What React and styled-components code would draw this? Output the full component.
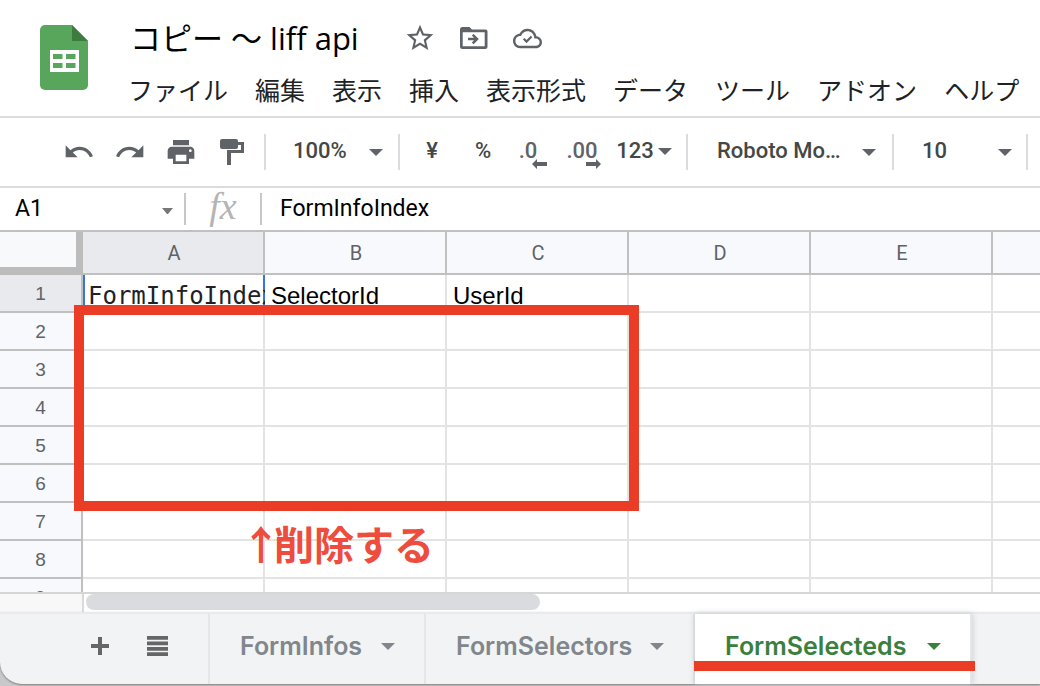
import React from 'react';
import styled, { createGlobalStyle } from 'styled-components';

const GlobalStyle = createGlobalStyle`
  *, *::before, *::after { box-sizing: border-box; }
  body { margin: 0; background: #c8c8c8; }
  button, input { font: inherit; color: inherit; border: 0; padding: 0; margin: 0; background: none; }
  button { cursor: pointer; }
`;

const UI = `Roboto, "Noto Sans CJK JP", sans-serif`;

const Page = styled.main`
  display: flex;
  flex-direction: column;
  height: 100vh;
  min-height: 600px;
  overflow: hidden;
  padding-bottom: 2px;
  background: linear-gradient(#c8c8c8, #c8c8c8) bottom / 100% 40px no-repeat;
  font-family: ${UI};
  position: relative;
`;

const Header = styled.header`
  display: flex;
  flex: none;
  height: 118px;
  padding-left: 40px;
  background: #fff;
  border-bottom: 2px solid #dadce0;
`;

const Logo = styled.svg`
  flex: none;
  width: 48px;
  height: 66px;
  margin-top: 25px;
`;

const HeaderBody = styled.div`
  flex: 1;
  min-width: 0;
  padding: 15px 0 0 42px;
`;

const TitleRow = styled.div`
  display: flex;
  align-items: center;
  height: 46px;
`;

const Title = styled.h1`
  margin: 0 45px 0 0;
  font: 400 31px/46px "Open Sans", "Noto Sans CJK JP", sans-serif;
  color: #000;
  white-space: nowrap;
`;

const TitleActions = styled.div`
  display: flex;
  gap: 22px;
`;

const IconButton = styled.button`
  display: flex;
  flex: none;
  align-items: center;
  justify-content: center;
  width: 32px;
  height: 32px;
  color: #5f6368;
  svg { display: block; fill: currentColor; }
`;

const MenuBar = styled.nav`
  display: flex;
  gap: 27px;
  margin-left: -2px;
`;

const MenuItem = styled.button`
  font: 400 25px/56px "Noto Sans CJK JP", sans-serif;
  color: #202124;
  white-space: nowrap;
`;

const Toolbar = styled.div`
  display: flex;
  flex: none;
  align-items: center;
  height: 70px;
  padding-left: 63px;
  background: #fff;
  border-bottom: 2px solid #dadce0;
  color: #444746;
  font: 500 22px/34px ${UI};
  overflow: hidden;
`;

const IconGroup = styled.div`
  display: flex;
  gap: 19px;
  margin-right: 16px;
`;

const Divider = styled.span`
  flex: none;
  width: 2px;
  height: 36px;
  background: #dadce0;
`;

const Choice = styled.button`
  display: flex;
  flex: none;
  align-items: center;
  justify-content: space-between;
  width: ${(p) => p.$w}px;
  height: 36px;
  padding: 0 ${(p) => p.$end || 16}px 2px ${(p) => p.$start}px;
  white-space: nowrap;
  svg { margin-top: 3px; }
`;

const Formats = styled.div`
  display: flex;
  flex: none;
  width: 286px;
  height: 36px;
  padding: 0 0 2px 6px;
`;

const FormatButton = styled.button`
  display: flex;
  flex: none;
  align-items: center;
  justify-content: center;
  gap: 4px;
  width: ${(p) => p.$w}px;
`;

const Decimal = styled.span`
  position: relative;
  color: #5f6368;
  svg { position: absolute; right: ${(p) => (p.$left ? -10 : -3)}px; bottom: -1px; fill: currentColor; }
`;

const Caret = styled.svg`
  flex: none;
  width: 14px;
  height: 7px;
  fill: ${(p) => p.$color || '#5f6368'};
`;

const FormulaBar = styled.div`
  display: flex;
  flex: none;
  align-items: center;
  height: 44px;
  background: #fff;
  border-bottom: 2px solid #c0c0c0;
  font: 400 23px/40px ${UI};
  color: #000;
`;

const NameBox = styled.label`
  display: flex;
  align-items: center;
  width: 184px;
  padding: 0 10px 0 15px;
  input { flex: 1; min-width: 0; height: 40px; }
  svg { margin-top: 4px; }
`;

const BarRule = styled.span`
  width: 2px;
  height: 32px;
  background: #c8c8c8;
`;

const Fx = styled.span`
  width: 74px;
  height: 40px;
  text-align: center;
  font: italic 400 38px/34px "Liberation Serif", serif;
  color: #b4b4b4;
`;

const FormulaInput = styled.input`
  flex: 1;
  min-width: 0;
  height: 40px;
  padding-left: 18px !important;
`;

const GridArea = styled.section`
  position: relative;
  flex: 1;
  min-height: 0;
  overflow: hidden;
  background: #fff;
`;

const Sheet = styled.table`
  width: 100%;
  table-layout: fixed;
  border-collapse: separate;
  border-spacing: 0;
  th, td { padding: 0; white-space: nowrap; }
  th:last-child, td:last-child { border-right: 0; }
`;

const Col = styled.col`
  width: ${(p) => p.$w}px;
`;

const Corner = styled.td`
  height: 43px;
  background: #f8f9fa;
  border-right: 7px solid #bcbcbc;
  border-bottom: 8px solid #bcbcbc;
`;

const ColHead = styled.th`
  height: 43px;
  background: ${(p) => (p.$active ? '#e8eaed' : '#f8f9fc')};
  border-right: 2px solid #c0c0c0;
  border-bottom: 2px solid #c0c0c0;
  font: 400 20px/40px ${UI};
  color: #5f6368;
  span { display: block; padding-left: 2px; }
`;

const RowHead = styled.th`
  height: 38px;
  background: ${(p) => (p.$active ? '#e8eaed' : '#f8f9fc')};
  border-right: 2px solid #c0c0c0;
  border-bottom: 2px solid #c0c0c0;
  font: 400 19px/34px "Liberation Sans", sans-serif;
  color: #5f6368;
  span { display: block; padding-top: 2px; }
`;

const Cell = styled.td`
  height: 38px;
  border-right: 2px solid ${(p) => (p.$active ? '#3574e2' : '#e2e3e3')};
  border-bottom: 2px solid #e2e3e3;
  box-shadow: ${(p) => (p.$active ? 'inset 2px 0 #3574e2' : 'none')};
  font: 400 24px/36px ${(p) => (p.$mono ? '"DejaVu Sans Mono", monospace' : '"Liberation Sans", sans-serif')};
  color: ${(p) => (p.$mono ? '#202124' : '#000')};
  div {
    width: calc(100% + 2px);
    height: 36px;
    padding: 3px 0 0 ${(p) => (p.$mono ? 5 : 6)}px;
    overflow: hidden;
  }
`;

const Frame = styled.div`
  position: absolute;
  left: 74px;
  top: 73px;
  width: 565px;
  height: 206px;
  border: 10px solid #eb3d25;
`;

const Note = styled.p`
  position: absolute;
  left: 248px;
  top: 283px;
  margin: 0;
  display: flex;
  align-items: center;
  font: 700 40px/56px "Noto Sans CJK JP", sans-serif;
  color: #ee4d3d;
  white-space: nowrap;
`;

const NoteArrow = styled.span`
  display: flex;
  justify-content: center;
  width: 26px;
`;

const ScrollRow = styled.div`
  display: flex;
  flex: none;
  height: 20px;
  background: #fff;
  border-top: 2px solid #d6d6d6;
`;

const ScrollCorner = styled.span`
  width: 84px;
  margin-right: 2px;
  background: #f8f8f8;
  border-right: 2px solid #d9d9d9;
`;

const Thumb = styled.span`
  width: 454px;
  height: 16px;
  border-radius: 8px;
  background: #dadbdf;
`;

const SheetBar = styled.footer`
  display: flex;
  flex: none;
  height: 72px;
  background: #f1f3f4;
  border-top: 2px solid #e8eaed;
  border-bottom-left-radius: 22px;
  box-shadow: 0 1px 2px #808080;
`;

const SheetTools = styled.div`
  display: flex;
  align-items: center;
  gap: 25px;
  width: 210px;
  padding: 0 0 6px 84px;
  border-right: 2px solid #e4e6e9;
  svg { fill: #666; }
`;

const Tab = styled.button`
  position: relative;
  display: flex;
  flex: none;
  align-items: center;
  justify-content: space-between;
  width: ${(p) => p.$w}px;
  padding: 0 29px 6px 30px !important;
  border-right: 2px solid #e4e6e9 !important;
  background: ${(p) => (p.$active ? '#fff' : 'transparent')} !important;
  box-shadow: ${(p) => (p.$active ? '0 0 6px #c4c7cc' : 'none')};
  color: ${(p) => (p.$active ? '#3a7f3c' : '#80868b')};
  font: 600 25px/36px Inter, sans-serif !important;
`;

const Underline = styled.span`
  position: absolute;
  left: -1px;
  right: -5px;
  bottom: 13px;
  height: 10px;
  background: #eb3d25;
`;

const Down = ({ color }) => (
  <Caret $color={color} viewBox="0 0 14 7" aria-hidden="true"><path d="M0 0h14L7 7z" /></Caret>
);

const Material = ({ d, size = 32 }) => (
  <svg width={size} height={size} viewBox="0 0 24 24" aria-hidden="true"><path d={d} /></svg>
);

const paths = {
  star: 'M22 9.24l-7.19-.62L12 2 9.19 8.63 2 9.24l5.46 4.73L5.82 21 12 17.27 18.18 21l-1.63-7.03L22 9.24zM12 15.4l-3.76 2.27 1-4.28-3.32-2.88 4.38-.38L12 6.1l1.71 4.04 4.38.38-3.32 2.88 1 4.28L12 15.4z',
  undo: 'M12.500 8c-2.650 0-5.050.99-6.900 2.600L2 7v9h9l-3.620-3.620c1.390-1.160 3.160-1.880 5.120-1.880 3.540 0 6.550 2.310 7.600 5.500l2.370-.78C21.080 11.030 17.150 8 12.500 8z',
  redo: 'M18.400 10.600C16.550 8.990 14.150 8 11.500 8c-4.650 0-8.580 3.030-9.960 7.220L3.900 16c1.050-3.190 4.050-5.500 7.600-5.500 1.950 0 3.730.72 5.120 1.880L13 16h9V7l-3.600 3.600z',
  print: 'M19 8H5c-1.660 0-3 1.340-3 3v6h4v4h12v-4h4v-6c0-1.660-1.340-3-3-3zm-3 11H8v-5h8v5zm3-7c-.55 0-1-.45-1-1s.45-1 1-1 1 .45 1 1-.45 1-1 1zm-1-9H6v4h12V3z',
};

const columns = ['A', 'B', 'C', 'D', 'E', ''];
const headings = ['FormInfoIndex', 'SelectorId', 'UserId'];
const rows = [1, 2, 3, 4, 5, 6, 7, 8, 9];
const menus = ['ファイル', '編集', '表示', '挿入', '表示形式', 'データ', 'ツール', 'アドオン', 'ヘルプ'];

export default function App() {
  return (
    <Page>
      <GlobalStyle />
      <Header>
        <Logo viewBox="0 0 48 66" aria-label="スプレッドシート">
          <path fill="#58a55c" d="M5 0h27l16 16v44a5 5 0 0 1-5 5H5a5 5 0 0 1-5-5V5a5 5 0 0 1 5-5z" />
          <path fill="#3c7d3f" d="M32 0l16 16H32z" />
          <path fill="#fff" fillRule="evenodd" d="M10 25h29v22H10zM13 29v5h9.500v-5zM26 29v5h9.500v-5zM13 38v5h9.500v-5zM26 38v5h9.500v-5z" />
        </Logo>
        <HeaderBody>
          <TitleRow>
            <Title>コピー 〜 liff api</Title>
            <TitleActions>
              <IconButton aria-label="スター"><Material d={paths.star} /></IconButton>
              <IconButton aria-label="移動">
                <svg width="28" height="22" viewBox="0 0 28 22" aria-hidden="true">
                  <path fillRule="evenodd" d="M2 0H9.500l2.500 2.500h13.500A2 2 0 0 1 27.500 4.500v15a2.500 2.500 0 0 1-2.500 2.500h-22.500A2.500 2.500 0 0 1 0 19.500v-17A2.500 2.500 0 0 1 2 0zM2.700 5.200v14.100h22V5.200z" />
                  <path d="M8 10.800h6l-2.200-2.200L13.600 7l5.200 5.100-5.200 5.200-1.800-1.700 2.200-2.300H8z" />
                </svg>
              </IconButton>
              <IconButton aria-label="保存済み">
                <svg width="29" height="29" viewBox="0 0 24 24" aria-hidden="true">
                  <path d="M19.350 10.040C18.670 6.590 15.640 4 12 4 9.110 4 6.610 5.640 5.360 8.040 2.340 8.360 0 10.910 0 14c0 3.310 2.690 6 6 6h13c2.760 0 5-2.240 5-5 0-2.640-2.050-4.780-4.650-4.960zM19 18H6c-2.210 0-4-1.790-4-4 0-2.050 1.530-3.760 3.560-3.970l1.070-.11.5-.95C8.080 7.140 9.940 6 12 6c2.620 0 4.880 1.860 5.390 4.430l.3 1.500 1.530.11c1.560.1 2.780 1.410 2.780 2.960 0 1.650-1.350 3-3 3z" />
                  <path d="M8.200 12.800l1.300-1.200 1.700 1.700 3.500-3.600 1.300 1.300-4.800 4.900z" />
                </svg>
              </IconButton>
            </TitleActions>
          </TitleRow>
          <MenuBar>{menus.map((m) => <MenuItem key={m}>{m}</MenuItem>)}</MenuBar>
        </HeaderBody>
      </Header>

      <Toolbar>
        <IconGroup>
          <IconButton aria-label="元に戻す"><Material d={paths.undo} size={34} /></IconButton>
          <IconButton aria-label="やり直し"><Material d={paths.redo} size={34} /></IconButton>
          <IconButton aria-label="印刷"><Material d={paths.print} size={34} /></IconButton>
          <IconButton aria-label="書式をコピー">
            <svg width="24" height="26" viewBox="0 0 24 26"><path d="M2 0h14q2 0 2 2v1h6v11h-13v12H7V11h14V6h-3v2q0 2-2 2H2Q0 10 0 8V2Q0 0 2 0z" /></svg>
          </IconButton>
        </IconGroup>
        <Divider />
        <Choice $w={132} $start={27} $end={15}>100%<Down /></Choice>
        <Divider />
        <Formats>
          <FormatButton $w={52}>¥</FormatButton>
          <FormatButton $w={50}>%</FormatButton>
          <FormatButton $w={40}>
            <Decimal $left>.0<svg width="15" height="10" viewBox="0 0 15 10"><path d="M0 5l5-5v3h10v4H5v3z" /></svg></Decimal>
          </FormatButton>
          <FormatButton $w={68}>
            <Decimal>.00<svg width="15" height="10" viewBox="0 0 15 10"><path d="M15 5l-5-5v3H0v4h10v3z" /></svg></Decimal>
          </FormatButton>
          <FormatButton $w={56}>123<Down /></FormatButton>
        </Formats>
        <Divider />
        <Choice $w={204} $start={29}>Roboto Mo…<Down /></Choice>
        <Divider />
        <Choice $w={132} $start={28} $end={14}>10<Down /></Choice>
        <Divider />
      </Toolbar>

      <FormulaBar>
        <NameBox>
          <input aria-label="名前ボックス" defaultValue="A1" />
          <Caret $color="#777" viewBox="0 0 14 7" aria-hidden="true"><path d="M2 0h11L8 6H7z" /></Caret>
        </NameBox>
        <BarRule />
        <Fx>fx</Fx>
        <BarRule />
        <FormulaInput aria-label="数式" defaultValue="FormInfoIndex" />
      </FormulaBar>

      <GridArea>
        <Sheet>
          <colgroup>
            <Col $w={83} />
            {columns.map((c) => (c ? <Col key={c} $w={182} /> : <col key="rest" />))}
          </colgroup>
          <thead>
            <tr>
              <Corner />
              {columns.map((c) => (
                <ColHead key={c || 'rest'} $active={c === 'A'} scope="col"><span>{c}</span></ColHead>
              ))}
            </tr>
          </thead>
          <tbody>
            {rows.map((r) => (
              <tr key={r}>
                <RowHead $active={r === 1} scope="row"><span>{r}</span></RowHead>
                {columns.map((c, i) => (
                  <Cell key={c || 'rest'} $active={r === 1 && i === 0} $mono={i === 0}>
                    {r === 1 && headings[i] ? <div>{headings[i]}</div> : null}
                  </Cell>
                ))}
              </tr>
            ))}
          </tbody>
        </Sheet>
        <Frame />
        <Note>
          <NoteArrow>↑</NoteArrow>削除する
        </Note>
      </GridArea>

      <ScrollRow><ScrollCorner /><Thumb /></ScrollRow>

      <SheetBar>
        <SheetTools>
          <IconButton aria-label="シートを追加">
            <svg width="18" height="18" viewBox="0 0 18 18"><path d="M7 0h4v7h7v4h-7v7H7v-7H0V7h7z" /></svg>
          </IconButton>
          <IconButton aria-label="すべてのシート">
            <svg width="21" height="20" viewBox="0 0 21 20"><path d="M0 0h21v3.700H0zM0 5.500h21v3.700H0zM0 11h21v3.700H0zM0 16.300h21V20H0z" /></svg>
          </IconButton>
        </SheetTools>
        <Tab $w={216}>FormInfos<Down color="#80868b" /></Tab>
        <Tab $w={269}>FormSelectors<Down color="#80868b" /></Tab>
        <Tab $w={277} $active>FormSelecteds<Down color="#3a7f3c" /><Underline /></Tab>
      </SheetBar>
    </Page>
  );
}
